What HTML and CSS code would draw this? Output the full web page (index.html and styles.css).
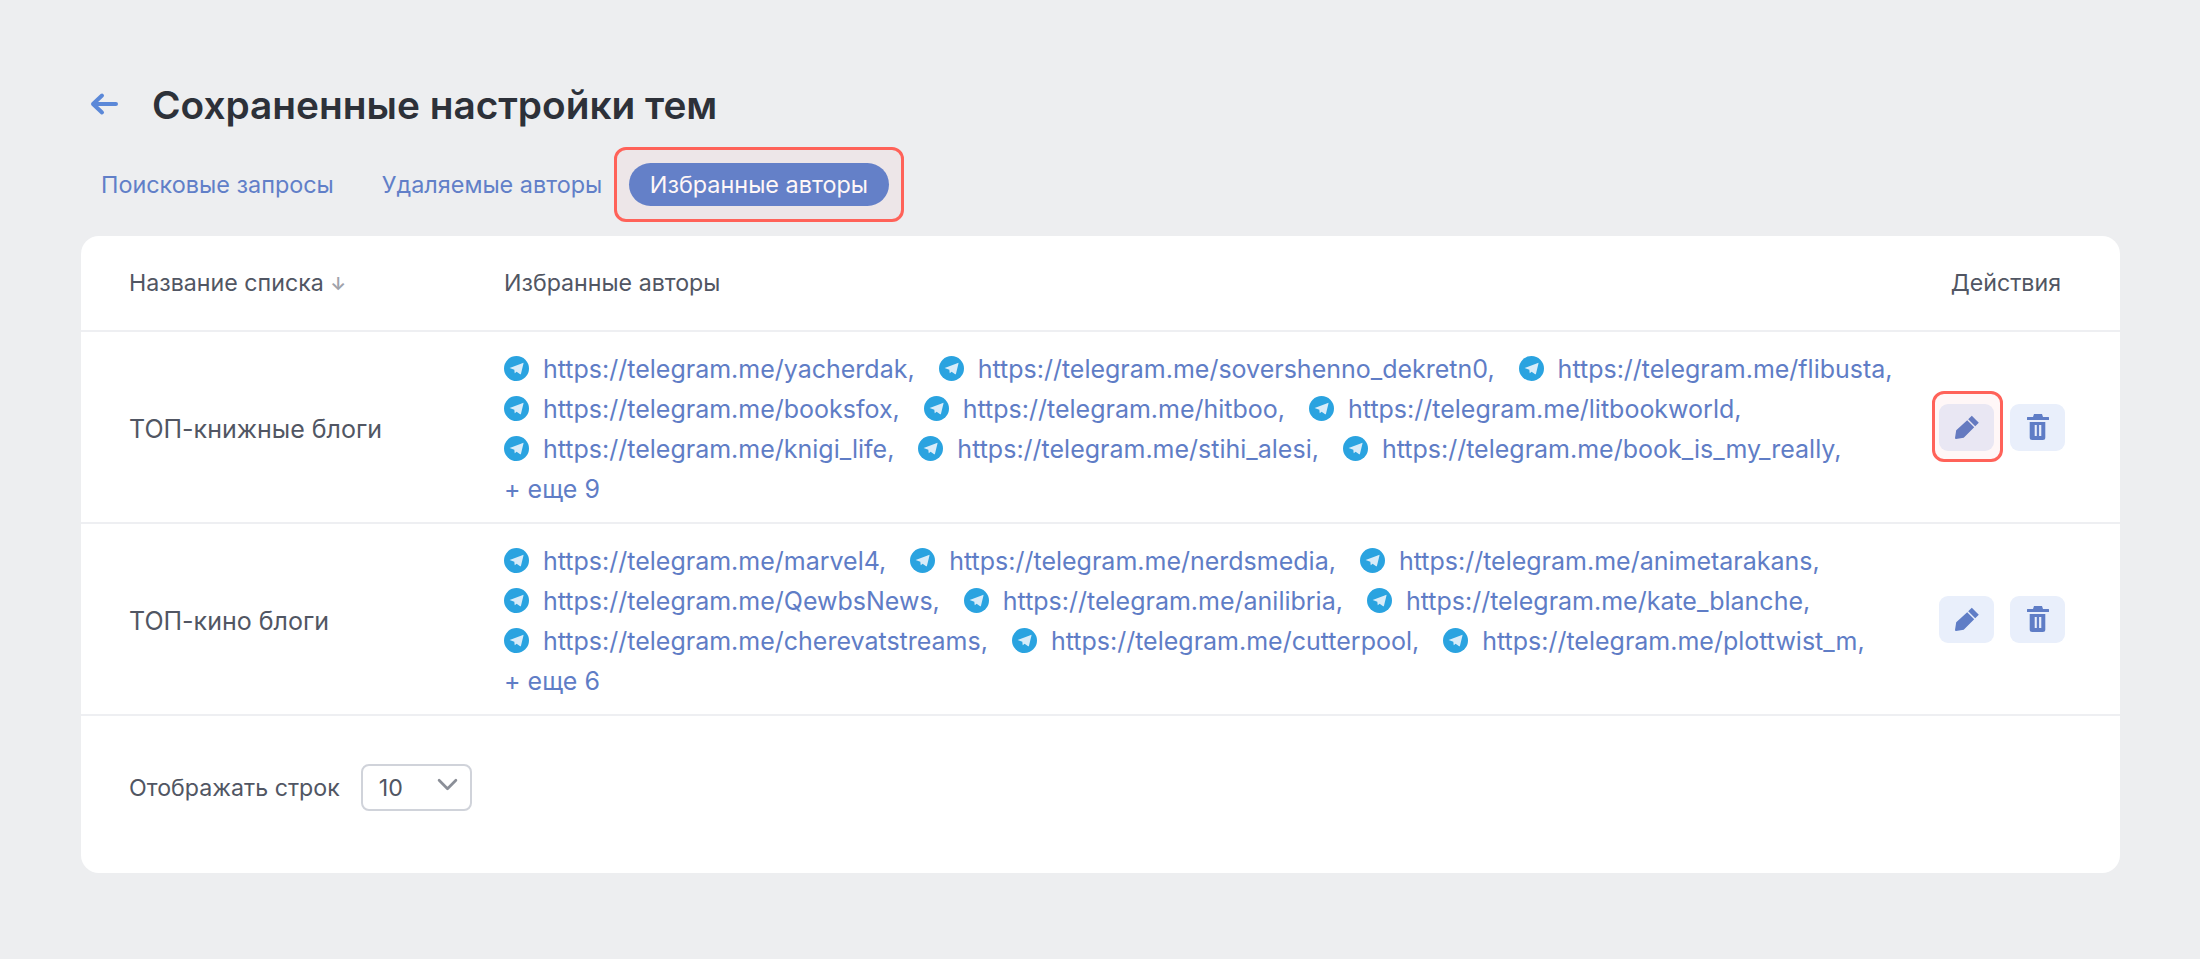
FILE: index.html
```html
<!DOCTYPE html>
<html lang="ru">
<head>
<meta charset="utf-8">
<title>Сохраненные настройки тем</title>
<link rel="stylesheet" href="styles.css">
</head>
<body>
<svg class="defs" width="0" height="0" aria-hidden="true">
  <symbol id="tg" viewBox="0 0 24 24">
    <circle cx="12" cy="12" r="12" fill="#2aa3e0"/>
    <path d="M5.400 11.600 18.200 6.600c.4-.1.6.1.5.5L16.300 17c-.1.5-.4.6-.8.4l-3.400-2.400-1.800 1.600-.4-3.400z" fill="#d8ecf9"/>
  </symbol>
  <symbol id="pencil" viewBox="0 0 24 24">
    <path d="M16.800.7 23.800 7.700 20.200 11.300 13.200 4.300zM12.200 5.300 19.200 12.300 8.700 22.800 1 24Q0 24 0 23L1.200 15.300z" fill="currentColor"/>
  </symbol>
  <symbol id="trash" viewBox="0 0 22 26">
    <path fill-rule="evenodd" d="M7 0h8l1 3h5.500q.5 0 .5.5v2q0 .5-.5.500H.5Q0 6 0 5.500v-2Q0 3 .5 3H6zM2.700 8h15.600v15.500q0 2.500-2.500 2.500H5.200q-2.500 0-2.500-2.500zM7.700 11v11h2.100V11zM12.100 11v11h2.200V11z" fill="currentColor"/>
  </symbol>
</svg>
<main class="page">
  <header class="title-row">
    <svg class="back" viewBox="0 0 30 24" width="30" height="24" aria-hidden="true"><path d="M13 3.500 4 12 13 20.500M4 12h23" fill="none" stroke="currentColor" stroke-width="4" stroke-linecap="round" stroke-linejoin="round"/></svg>
    <h1 class="title">Сохраненные настройки тем</h1>
  </header>
  <nav class="tabs">
    <a class="tab">Поисковые запросы</a>
    <a class="tab">Удаляемые авторы</a>
    <a class="tab tab-active">Избранные авторы<span class="mark mark-tab"></span></a>
  </nav>
  <section class="card">
    <div class="row row-head">
      <div class="col-name">Название списка <span class="sort">↓</span></div>
      <div class="col-links">Избранные авторы</div>
      <div class="col-actions head-actions">Действия</div>
    </div>
    <div class="row">
      <div class="col-name">ТОП-книжные блоги</div>
      <div class="col-links">
        <div class="links">
          <a class="link"><svg class="tg"><use href="#tg"/></svg>https://telegram.me/yacherdak,</a>
          <a class="link"><svg class="tg"><use href="#tg"/></svg>https://telegram.me/sovershenno_dekretn0,</a>
          <a class="link"><svg class="tg"><use href="#tg"/></svg>https://telegram.me/flibusta,</a>
          <a class="link"><svg class="tg"><use href="#tg"/></svg>https://telegram.me/booksfox,</a>
          <a class="link"><svg class="tg"><use href="#tg"/></svg>https://telegram.me/hitboo,</a>
          <a class="link"><svg class="tg"><use href="#tg"/></svg>https://telegram.me/litbookworld,</a>
          <a class="link"><svg class="tg"><use href="#tg"/></svg>https://telegram.me/knigi_life,</a>
          <a class="link"><svg class="tg"><use href="#tg"/></svg>https://telegram.me/stihi_alesi,</a>
          <a class="link"><svg class="tg"><use href="#tg"/></svg>https://telegram.me/book_is_my_really,</a>
        </div>
        <a class="more">+ еще 9</a>
      </div>
      <div class="col-actions">
        <button class="btn btn-marked"><svg class="ic ic-pencil"><use href="#pencil"/></svg><span class="mark mark-btn"></span></button>
        <button class="btn"><svg class="ic ic-trash"><use href="#trash"/></svg></button>
      </div>
    </div>
    <div class="row">
      <div class="col-name">ТОП-кино блоги</div>
      <div class="col-links">
        <div class="links">
          <a class="link"><svg class="tg"><use href="#tg"/></svg>https://telegram.me/marvel4,</a>
          <a class="link"><svg class="tg"><use href="#tg"/></svg>https://telegram.me/nerdsmedia,</a>
          <a class="link"><svg class="tg"><use href="#tg"/></svg>https://telegram.me/animetarakans,</a>
          <a class="link"><svg class="tg"><use href="#tg"/></svg>https://telegram.me/QewbsNews,</a>
          <a class="link"><svg class="tg"><use href="#tg"/></svg>https://telegram.me/anilibria,</a>
          <a class="link"><svg class="tg"><use href="#tg"/></svg>https://telegram.me/kate_blanche,</a>
          <a class="link"><svg class="tg"><use href="#tg"/></svg>https://telegram.me/cherevatstreams,</a>
          <a class="link"><svg class="tg"><use href="#tg"/></svg>https://telegram.me/cutterpool,</a>
          <a class="link"><svg class="tg"><use href="#tg"/></svg>https://telegram.me/plottwist_m,</a>
        </div>
        <a class="more">+ еще 6</a>
      </div>
      <div class="col-actions">
        <button class="btn"><svg class="ic ic-pencil"><use href="#pencil"/></svg></button>
        <button class="btn"><svg class="ic ic-trash"><use href="#trash"/></svg></button>
      </div>
    </div>
    <footer class="pager">
      <span class="pager-label">Отображать строк</span>
      <div class="select"><span>10</span><svg class="chevron" viewBox="0 0 20 12" width="21" height="13" aria-hidden="true"><path d="M2 2l8 8 8-8" fill="none" stroke="currentColor" stroke-width="2.600" stroke-linecap="round" stroke-linejoin="round"/></svg></div>
    </footer>
  </section>
</main>
</body>
</html>
```

FILE: styles.css
```css
* { box-sizing: border-box; }
html, body { margin: 0; height: 100%; }
body {
  background: #edeef0;
  color: #515663;
  font-family: Inter, "Noto Sans", sans-serif;
  font-size: 23.2px;
  overflow: hidden;
}
.defs { position: absolute; }
.page { padding: 82px 80px 0 81px; }
.title-row { display: flex; align-items: center; gap: 33px; height: 46px; padding-left: 8px; }
.back { color: #5b88d8; flex: none; margin-top: -3px; }
.title { margin: 0; font-size: 38.8px; line-height: 46px; font-weight: 600; color: #2d3139; }
.tabs { display: flex; align-items: center; gap: 48px; margin-top: 35px; padding-left: 20px; height: 43px; font-size: 23.4px; }
.tab { color: #617fc8; line-height: 43px; white-space: nowrap; position: relative; }
.tab-active { background: #5e84cf; color: #fff; border-radius: 22px; padding: 0 21px; margin-left: -21.5px; }
.mark { position: absolute; border: 3px solid #ff6259; background: rgba(255, 60, 50, 0.04); pointer-events: none; }
.mark-tab { inset: -16px -15px -16px -15px; border-radius: 12px; }
.mark-btn { inset: -13px -9px -11px -7px; border-radius: 12px; }
.card { background: #fff; border-radius: 18px; margin-top: 30px; height: 637px; }
.row { display: flex; align-items: center; border-bottom: 2px solid #eeeff2; height: 192px; padding: 0 48px; }
.row-head { height: 96px; }
.row:not(.row-head) .col-name, .row:not(.row-head) .col-links { padding-top: 3px; }
.row:not(.row-head) .col-name, .more, .link { font-size: 25px; }
.col-name { flex: 0 0 375px; }
.sort { color: #a0a3ab; font-size: 18px; font-weight: 600; }
.col-links { flex: 1 1 auto; min-width: 0; }
.col-actions { flex: none; display: flex; gap: 16px; margin-right: 7px; }
.head-actions { margin-right: 11px; }
.links { display: flex; flex-wrap: wrap; column-gap: 24px; max-width: 1400px; }
.link { display: flex; align-items: center; gap: 14px; height: 40px; color: #5f7dc6; white-space: nowrap; }
.tg { width: 25px; height: 25px; flex: none; }
.more { display: block; height: 40px; line-height: 40px; color: #5f7dc6; }
.btn { position: relative; display: flex; align-items: center; justify-content: center; width: 55px; height: 47px; padding: 0; border: 0; border-radius: 9px; background: #e9effb; color: #5f7dc6; }
.ic { display: block; }
.ic-pencil { width: 24px; height: 24px; }
.ic-trash { width: 22px; height: 26px; }
.pager { display: flex; align-items: center; gap: 21px; padding: 48px 48px 0; }
.select { display: flex; align-items: center; justify-content: space-between; width: 111px; height: 47px; padding: 0 12px 0 16px; border: 2px solid #d0d3da; border-radius: 8px; }
.chevron { color: #8b8f98; margin-top: -6px; }
```
